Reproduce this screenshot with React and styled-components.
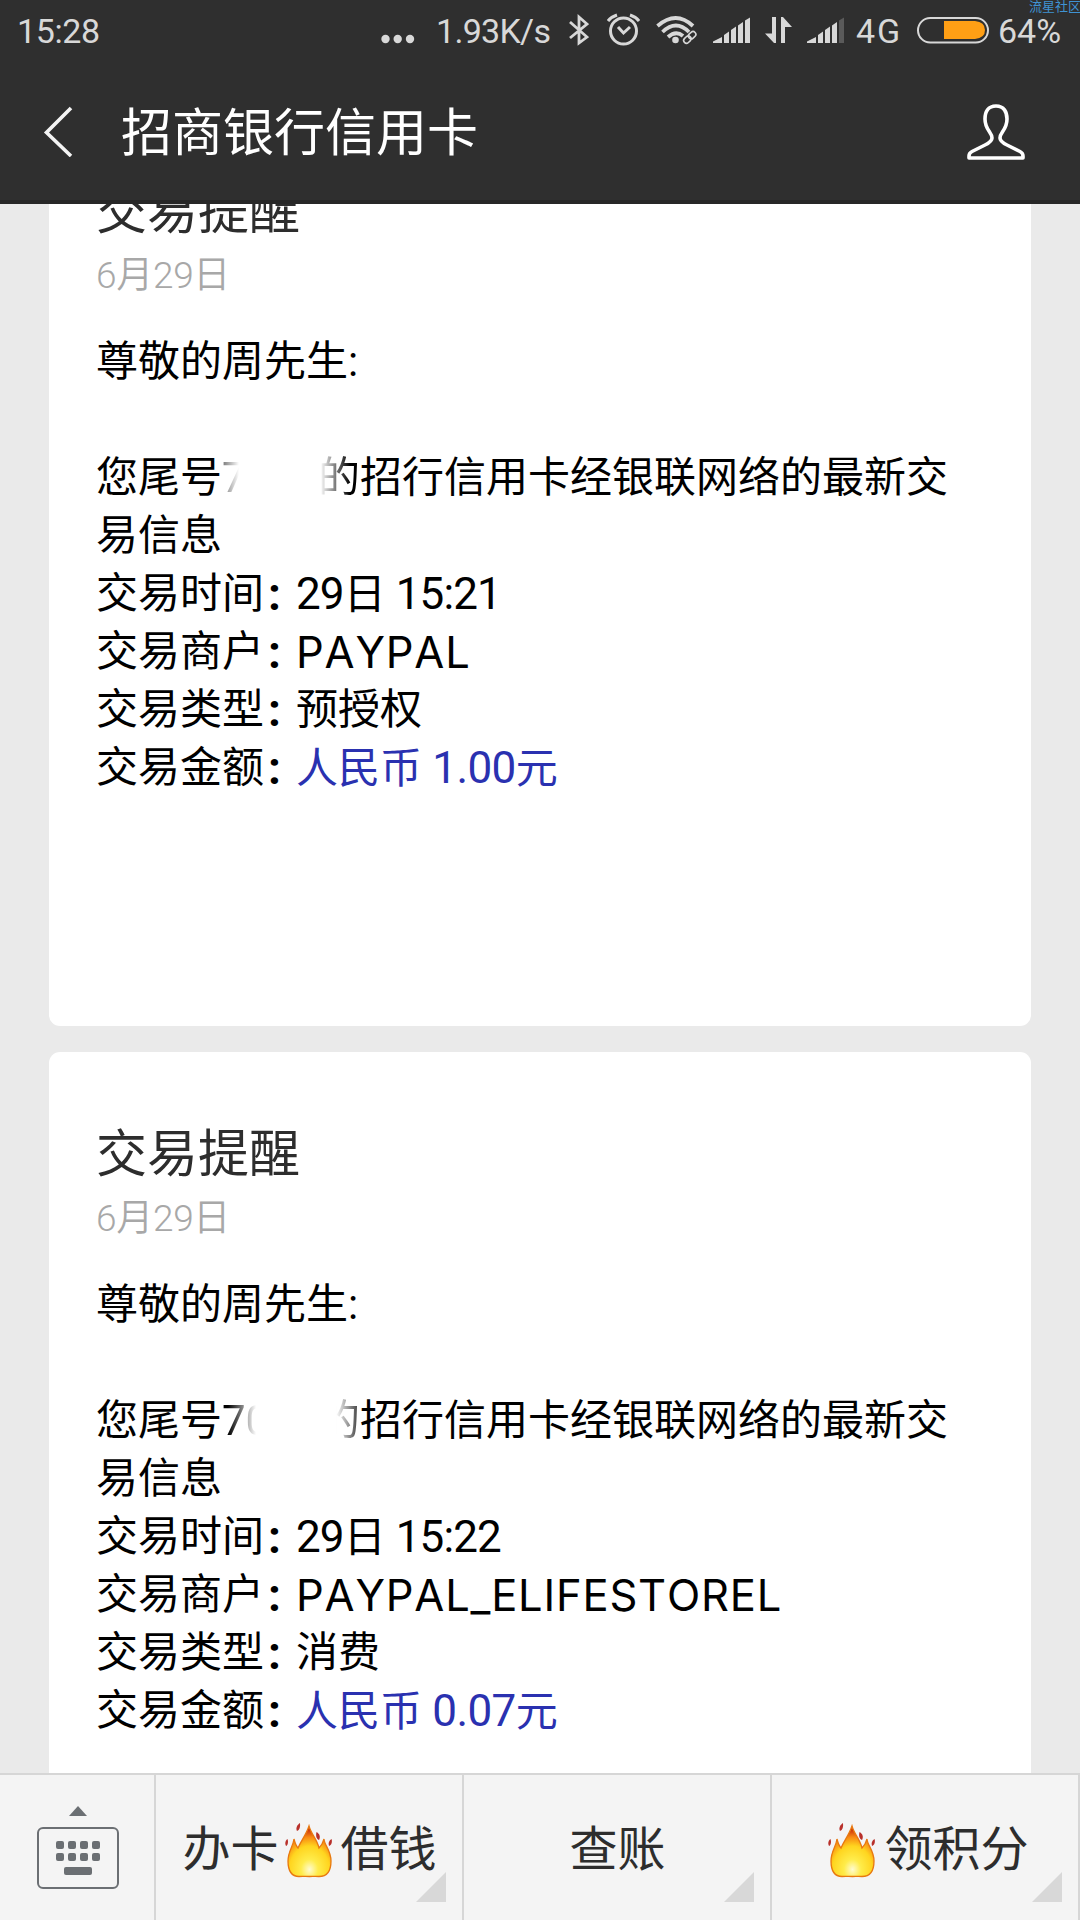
import React from 'react';
import styled, { createGlobalStyle } from 'styled-components';

const DARK = '#2f2f2f';
const STATUS = '#d8d8d8';
const LINE = '#d6d6d6';
const KEY_GREY = '#6b6f73';
const BLUE = '#2a31b0';

const GlobalStyle = createGlobalStyle`
	* {
		box-sizing: border-box;
	}
	body {
		margin: 0;
		background: #eaeaea;
		font-family: Roboto, "Noto Sans CJK SC", sans-serif;
	}
`;

const Screen = styled.div`
	display: flex;
	flex-direction: column;
	width: 1080px;
	height: 1920px;
	overflow: hidden;
	position: relative;
`;

const Header = styled.header`
	height: 204px;
	flex: none;
	background: ${DARK};
	border-bottom: 4px solid #272727;
`;

const StatusBar = styled.div`
	display: flex;
	align-items: center;
	height: 62px;
	padding-left: 17px;
	color: ${STATUS};
	font-size: 34px;
	line-height: 62px;
	white-space: nowrap;

	svg {
		flex: none;
		display: block;
	}
`;

const StatusText = styled.span`
	width: ${({ $width }) => $width}px;
	margin-left: ${({ $gap }) => $gap || 0}px;
	letter-spacing: ${({ $spacing }) => $spacing || 0}px;
	flex: none;
`;

const StatusIcon = styled.svg`
	width: ${({ $width }) => $width}px;
	height: 62px;
	margin-left: ${({ $gap }) => $gap}px;
	fill: none;
	stroke: ${STATUS};
`;

const Watermark = styled.span`
	position: absolute;
	top: 0;
	right: -1px;
	color: #3f93d3;
	font-size: 13px;
	line-height: 13px;
`;

const TitleBar = styled.div`
	display: flex;
	align-items: center;
	height: 138px;
	padding: 0 54px 0 43px;
`;

const Title = styled.h1`
	flex: 1;
	margin: 0 0 0 48px;
	padding-top: 5px;
	color: #fff;
	font-size: 51px;
	font-weight: 400;
	line-height: 70px;
`;

const Messages = styled.main`
	flex: 1;
	min-height: 0;
	overflow: hidden;
	padding: 0 49px;
`;

const List = styled.div`
	display: flex;
	flex-direction: column;
	gap: 26px;
	margin-top: -95px;
`;

const Card = styled.article`
	height: 917px;
	flex: none;
	padding: 67px 48px 0 47px;
	border-radius: 11px;
	background: #fff;
`;

const CardTitle = styled.h2`
	margin: 0;
	color: #2d2d2d;
	font-size: 51px;
	font-weight: 400;
	line-height: 72px;
`;

const CardDate = styled.div`
	margin-bottom: 29px;
	color: #a8a8a8;
	font-size: 37px;
	font-weight: 350;
	letter-spacing: -0.3px;
	line-height: 56px;
`;

const Line = styled.p`
	margin: 0 0 ${({ $after }) => $after || 0}px;
	min-height: 58px;
	color: #000;
	font-size: 42px;
	line-height: 58px;
`;

const Digits = styled.span`
	display: inline-block;
	width: 96px;
	height: 58px;
	vertical-align: top;
	mask-image: linear-gradient(to right, #000 ${({ $from }) => $from}px, transparent ${({ $to }) => $to}px);
`;

const Faded = styled.span`
	display: inline-block;
	vertical-align: top;
	mask-image: linear-gradient(to right, transparent ${({ $from }) => $from}px, #000 ${({ $to }) => $to}px);
`;

const Row = styled.div`
	display: flex;
	height: 58px;
	font-size: 42px;
	line-height: 58px;
	color: #000;
`;

const Colon = styled.span`
	width: 32px;
	padding-left: 4px;
	font-weight: 700;
	font-size: 46px;
`;

const Value = styled.span`
	color: ${({ $blue }) => ($blue ? BLUE : '#000')};
	font-size: 42px;
	white-space: pre;
`;

const Latin = styled.span`
	font-size: 44px;
	letter-spacing: ${({ $spacing }) => $spacing || -0.9}px;
`;

const Merchant = styled.span`
	font-family: Inter, "Noto Sans CJK SC", sans-serif;
	font-size: 43.5px;
	font-kerning: none;
	letter-spacing: 0.8px;
`;

const Menu = styled.footer`
	display: flex;
	flex: none;
	height: 147px;
	border-top: 2px solid ${LINE};
	background: #f4f4f4;
`;

const KeyboardCell = styled.div`
	width: 156px;
	border-right: 2px solid ${LINE};
`;

const MenuItem = styled.div`
	position: relative;
	display: flex;
	flex: 1;
	align-items: center;
	justify-content: center;
	padding: 4px 0 0 1px;
	border-right: 2px solid ${LINE};
	color: #2d2d2d;
	font-size: 48px;
	line-height: 70px;

	&::after {
		content: '';
		position: absolute;
		right: 16px;
		bottom: 18px;
		border-style: solid;
		border-width: 0 0 30px 30px;
		border-color: transparent transparent #d8d8d8 transparent;
	}
`;

const FlameSvg = styled.svg`
	width: 48px;
	height: 56px;
	margin: 0 8px 0 6px;
`;

function Signal({ gap, weak }) {
	return (
		<StatusIcon $width={38} $gap={gap} viewBox="0 0 38 62">
			<g fill={STATUS} stroke="none">
				<path d="M0 43V41.500L9 37V43Z" />
				<path d="M11 43V35L16 31.500V43Z" />
				<path d="M18 43V30L23 26.500V43Z" />
				<path d="M25 43V25.500L30 22V43Z" />
				<path d="M32 43V20.500L37 17.500V43Z" fill={weak ? '#5a5a5a' : STATUS} />
			</g>
		</StatusIcon>
	);
}

function Flame({ id }) {
	return (
		<FlameSvg viewBox="0 0 48 56">
			<defs>
				<radialGradient id={id} cx="0.500" cy="0.860" r="0.800">
					<stop offset="0" stopColor="#fffbd0" />
					<stop offset="0.250" stopColor="#ffec4a" />
					<stop offset="0.580" stopColor="#ffd51f" />
					<stop offset="0.800" stopColor="#f88a12" />
					<stop offset="1" stopColor="#c92a0a" />
				</radialGradient>
			</defs>
			<path
				d="M24 4C26 12 32 17 34 26C36 24 38 21 39 17C39 23 46 28 46 39C46 50 41 54.500 34 54.500C30 54.500 28 54 24.500 54.500C20 54 18 54.500 14 54.500C7 54.500 3 49 3 39C3 29 8 25 9 17C10 21 11 24 13 26C16 19 21 13 24 4Z"
				fill={`url(#${id})`}
				stroke="#e8790f"
				strokeWidth="1.300"
			/>
			<g fill="#b8302a">
				<path d="M15 1C15.500 5 14.500 8 12 9C10.500 6 12 3 15 1Z" />
				<path d="M31.500 10C35 12 35.500 15 34 18C31.500 17 30.500 14 31.500 10Z" />
				<path d="M2.500 17C3.500 20 3 23 1 24C-0.500 21 0.500 18.500 2.500 17Z" />
				<path d="M46.500 17C47.500 20 46.500 23 44 24C43 21 44 18.500 46.500 17Z" />
			</g>
		</FlameSvg>
	);
}

function Keyboard() {
	return (
		<svg width="154" height="145" viewBox="0 0 154 145">
			<path d="M69 41L78 31L87 41Z" fill={KEY_GREY} />
			<rect x="38" y="53" width="80" height="60" rx="5" fill="none" stroke={KEY_GREY} strokeWidth="2" />
			<g fill={KEY_GREY}>
				{[56, 68, 80, 92].map((x) => (
					<React.Fragment key={x}>
						<rect x={x} y="66" width="8" height="8" rx="2" />
						<rect x={x} y="78" width="8" height="8" rx="2" />
					</React.Fragment>
				))}
				<rect x="64" y="92" width="28" height="8" rx="2" />
			</g>
		</svg>
	);
}

function Notice({ digits, digitFade, charFade, time, merchant, type, amount }) {
	return (
		<Card>
			<CardTitle>交易提醒</CardTitle>
			<CardDate>6月29日</CardDate>
			<Line $after={58}>尊敬的周先生:</Line>
			<Line>
				您尾号
				<Digits $from={digitFade[0]} $to={digitFade[1]}>{digits}</Digits>
				<Faded $from={charFade[0]} $to={charFade[1]}>的</Faded>
				招行信用卡经银联网络的最新交
				<br />
				易信息
			</Line>
			<Row>交易时间<Colon>:</Colon><Value><Latin>29</Latin>日<Latin> {time}</Latin></Value></Row>
			<Row>交易商户<Colon>:</Colon><Value><Merchant>{merchant}</Merchant></Value></Row>
			<Row>交易类型<Colon>:</Colon><Value>{type}</Value></Row>
			<Row>交易金额<Colon>:</Colon><Value $blue>人民币<Latin $spacing={-0.6}> {amount}</Latin>元</Value></Row>
		</Card>
	);
}

export default function App() {
	return (
		<Screen>
			<GlobalStyle />
			<Header>
				<StatusBar>
					<StatusText $width={364} $spacing={-0.4}>15:28</StatusText>
					<StatusIcon $width={34} $gap={0} viewBox="0 0 34 62">
						<g fill={STATUS} stroke="none">
							<circle cx="4.500" cy="39" r="4.200" />
							<circle cx="16.700" cy="39" r="4.200" />
							<circle cx="29" cy="39" r="4.200" />
						</g>
					</StatusIcon>
					<StatusText $width={115} $gap={21} $spacing={-0.7}>1.93K/s</StatusText>
					<StatusIcon $width={20} $gap={18} viewBox="0 0 20 62" strokeWidth="2.800">
						<path d="M1 22L18 37L10 43V17L18 24L1 38" />
					</StatusIcon>
					<StatusIcon $width={33} $gap={18} viewBox="0 0 33 62" strokeWidth="3">
						<circle cx="16.500" cy="31" r="13" />
						<path d="M11 27L16.500 33L23 27" />
						<path d="M1 21Q4 17 10 15M32 21Q29 17 23 15" />
					</StatusIcon>
					<StatusIcon $width={42} $gap={16} viewBox="0 0 42 62" strokeWidth="3.800">
						<path d="M1.500 26Q20 10 37 26" />
						<path d="M6.500 32Q20 19 33 32" />
						<path d="M12 37Q20 30 27 36" />
						<circle cx="19.500" cy="40" r="3.300" fill={STATUS} stroke="none" />
						<g strokeWidth="1.600" transform="rotate(-43 33.500 37.500)">
							<rect x="26.500" y="34.800" width="8" height="5.600" rx="2.800" />
							<rect x="33" y="34.800" width="8" height="5.600" rx="2.800" />
						</g>
					</StatusIcon>
					<Signal gap={15} />
					<StatusIcon $width={28} $gap={14} viewBox="0 0 28 62">
						<path d="M7 17H11V43H9L0 33.500H7ZM16 43V17H18L27 27H20V43Z" fill={STATUS} stroke="none" />
					</StatusIcon>
					<Signal gap={14} weak />
					<StatusText $width={48} $gap={11} $spacing={2}>4G</StatusText>
					<StatusIcon $width={72} $gap={13} viewBox="0 0 72 62">
						<rect x="1" y="18" width="70" height="24.500" rx="12.250" strokeWidth="2" />
						<path d="M27 21H58Q68 22 68 30T58 39H27Z" fill="#ff9f15" stroke="none" />
					</StatusIcon>
					<StatusText $width={70} $gap={9}>64%</StatusText>
				</StatusBar>
				<Watermark>流星社区</Watermark>
				<TitleBar>
					<svg width="30" height="52" viewBox="0 0 30 52" fill="none" stroke="#f4f4f4" strokeWidth="3.600">
						<path d="M28 3L3.500 27.500L28 51" />
					</svg>
					<Title>招商银行信用卡</Title>
					<svg width="60" height="58" viewBox="0 0 60 58" fill="none" stroke="#fff" strokeWidth="3.600" strokeLinejoin="round">
						<path d="M30 4C22 4 19 10 19 17C19 28 26 30 26 36C26 39 23 41 19 43L6 49.500Q3 51 3 54V56H57V54Q57 51 54 49.500L41 43C37 41 34 39 34 36C34 30 41 28 41 17C41 10 38 4 30 4Z" />
					</svg>
				</TitleBar>
			</Header>
			<Messages>
				<List>
					<Notice
						digits="7"
						digitFade={[-14, 17]}
						charFade={[2, 32]}
						time="15:21"
						merchant="PAYPAL"
						type="预授权"
						amount="1.00"
					/>
					<Notice
						digits="70"
						digitFade={[6, 34]}
						charFade={[18, 48]}
						time="15:22"
						merchant="PAYPAL_ELIFESTOREL"
						type="消费"
						amount="0.07"
					/>
				</List>
			</Messages>
			<Menu>
				<KeyboardCell>
					<Keyboard />
				</KeyboardCell>
				<MenuItem>办卡<Flame id="flameLoan" />借钱</MenuItem>
				<MenuItem>查账</MenuItem>
				<MenuItem><Flame id="flamePoints" />领积分</MenuItem>
			</Menu>
		</Screen>
	);
}
